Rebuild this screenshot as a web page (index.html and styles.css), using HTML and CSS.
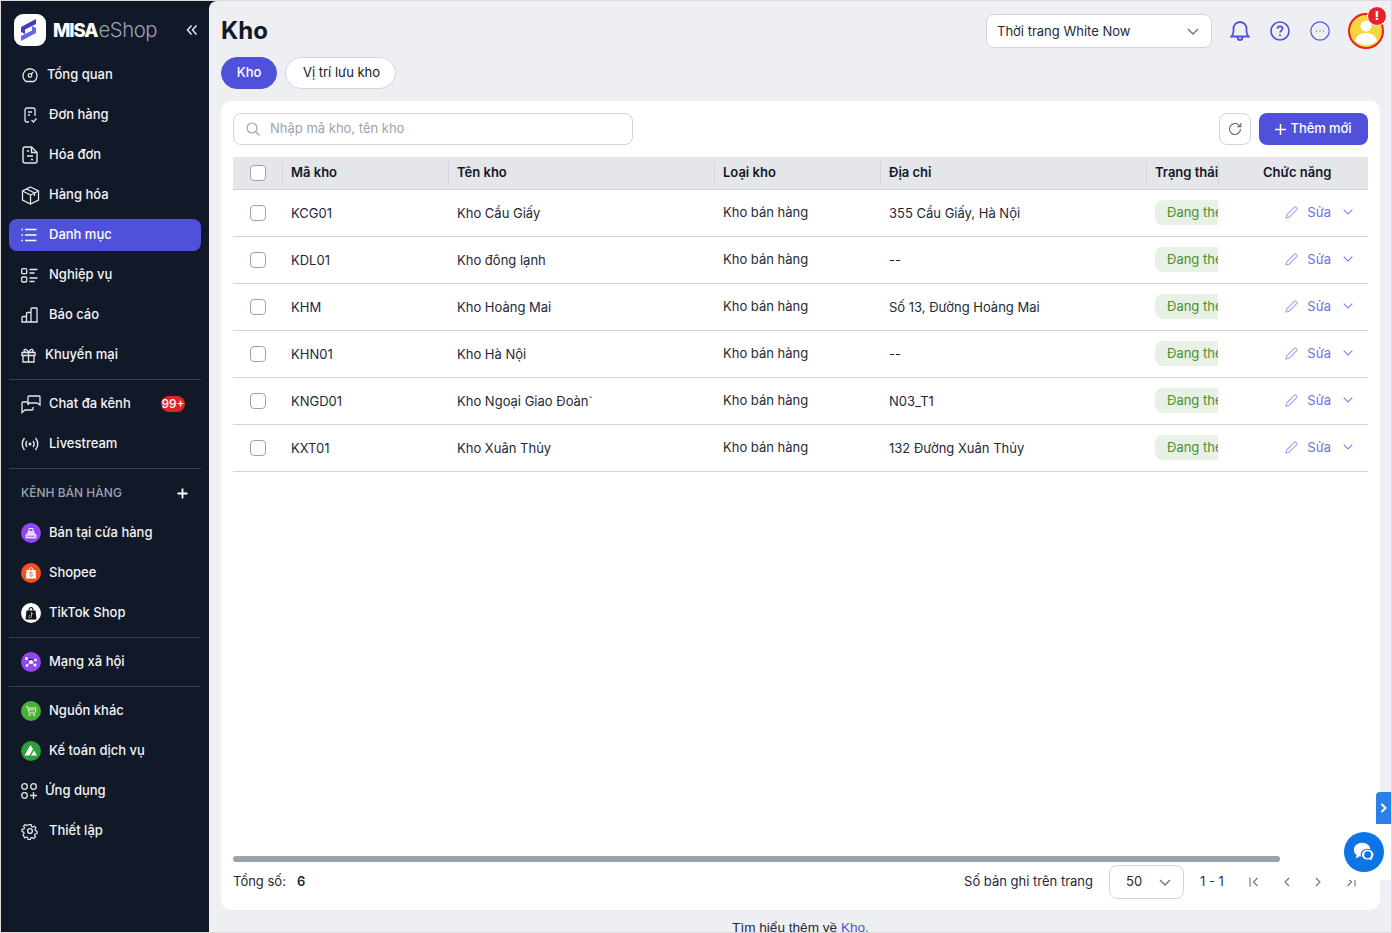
FILE: index.html
```html
<!DOCTYPE html>
<html lang="vi">
<head>
<meta charset="utf-8">
<title>Kho</title>
<link rel="stylesheet" href="styles.css">
</head>
<body>
<div class="app">
  <aside class="sidebar">
    <div class="brand">
      <span class="logo"><svg width="32" height="32" viewBox="0 0 32 32"><path d="M22 5 7 13v5l4 2v-4.500L22 10z" fill="#3f3fb8"/><path d="M7 27l15-8v-5l-4-2v4.500L7 22z" fill="#6567ea"/></svg></span>
      <span class="brand-name"><b>MISA</b><i>eShop</i></span>
      <svg class="collapse" width="12" height="12" viewBox="0 0 12 12" fill="none" stroke="#e5e7eb" stroke-width="1.500"><path d="M5.500 1.500 1.500 6l4 4.500M10.500 1.500 6.500 6l4 4.500"/></svg>
    </div>
    <nav class="nav">
      <a class="item w26"><span class="ic"><svg width="18" height="18" viewBox="0 0 18 18" fill="none" stroke="#e5e7eb" stroke-width="1.300"><path d="M5 15.500h8a7 7 0 1 0-8 0z"/><circle cx="9" cy="9.500" r="1.800"/><path d="M10.300 8.200 12 6"/></svg></span>Tổng quan</a>
      <a class="item"><span class="ic"><svg width="18" height="18" viewBox="0 0 18 18" fill="none" stroke="#e5e7eb" stroke-width="1.300"><path d="M8 16H6a2 2 0 0 1-2-2V4a2 2 0 0 1 2-2h6a2 2 0 0 1 2 2v6"/><path d="M7 6h4M7 9h2M10.500 14l2 2 3-3.500"/></svg></span>Đơn hàng</a>
      <a class="item"><span class="ic"><svg width="18" height="20" viewBox="0 0 18 20" fill="none" stroke="#e5e7eb" stroke-width="1.400"><path d="M10.500 2H4a2 2 0 0 0-2 2v12a2 2 0 0 0 2 2h10a2 2 0 0 0 2-2V7.500z"/><path d="M10.500 2v5.500H16M6 6h2M6 11h6M10 14.500h2"/></svg></span>Hóa đơn</a>
      <a class="item"><span class="ic"><svg width="19" height="19" viewBox="0 0 19 19" fill="none" stroke="#e5e7eb" stroke-width="1.300"><path d="M9.500 1 17.500 5v9l-8 4-8-4V5zM1.500 5l8 4 8-4M9.500 9v9M5.500 3l8 4v3"/></svg></span>Hàng hóa</a>
      <a class="item active"><span class="ic"><svg width="16" height="14" viewBox="0 0 16 14" fill="none" stroke="#fff" stroke-width="1.500"><path d="M4 1.500h11.500M4 7h11.500M4 12.500h11.500M.5 1.500h1.500M.5 7h1.500M.5 12.500h1.500"/></svg></span>Danh mục</a>
      <a class="item"><span class="ic"><svg width="17" height="15" viewBox="0 0 17 15" fill="none" stroke="#e5e7eb" stroke-width="1.300"><rect x=".7" y=".7" width="5" height="5" rx="1"/><rect x=".7" y="9" width="5" height="5" rx="1"/><path d="M8.500 1.500h8M8.500 5h5M8.500 10h8M8.500 13.500h5"/></svg></span>Nghiệp vụ</a>
      <a class="item"><span class="ic"><svg width="17" height="16" viewBox="0 0 17 16" fill="none" stroke="#e5e7eb" stroke-width="1.300"><path d="M1 15V10.500a1 1 0 0 1 1-1h3.500V15zM5.500 15V6.500a1 1 0 0 1 1-1h3.500V15zM10 15V2a1 1 0 0 1 1-1h4.500a.5.5 0 0 1 .5.500V15zM1 15h15"/></svg></span>Báo cáo</a>
      <a class="item w24"><span class="ic"><svg width="15" height="15" viewBox="0 0 15 15" fill="none" stroke="#e5e7eb" stroke-width="1.300"><path d="M1 4.500h13v3H1zM2 7.500V14h11V7.500M7.500 4.500V14M7.500 4.500C6 1 3 .5 3 2.500c0 1.500 2 2 4.500 2zM7.500 4.500C9 1 12 .5 12 2.500c0 1.500-2 2-4.500 2z"/></svg></span>Khuyến mại</a>
      <hr class="sep">
      <a class="item"><span class="ic"><svg width="20" height="19" viewBox="0 0 20 19" fill="none" stroke="#e5e7eb" stroke-width="1.300"><path d="M7 7H2a1 1 0 0 0-1 1v9.500l3-2.500h7a1 1 0 0 0 1-1v-2"/><path d="M7 10V2a1 1 0 0 1 1-1h10a1 1 0 0 1 1 1v8l-3-2H8z"/></svg></span>Chat đa kênh<span class="badge">99+</span></a>
      <a class="item"><span class="ic"><svg width="18" height="14" viewBox="0 0 18 14" fill="none" stroke="#e5e7eb" stroke-width="1.400"><path d="M3.500 1C.5 4.500.5 9.500 3.500 13M14.500 1c3 3.500 3 8.500 0 12M6 4c-1.500 2-1.500 4 0 6M12 4c1.500 2 1.500 4 0 6"/><circle cx="9" cy="7" r=".8" fill="#e5e7eb"/></svg></span>Livestream</a>
      <hr class="sep">
      <div class="section"><span>KÊNH BÁN HÀNG</span><svg width="11" height="11" viewBox="0 0 11 11" stroke="#fff" stroke-width="1.800"><path d="M5.500 .5v10M.5 5.500h10"/></svg></div>
      <a class="item"><span class="ic"><svg width="20" height="20" viewBox="0 0 20 20"><circle cx="10" cy="10" r="10" fill="#9146f0"/><path d="M5 15h10v-3.500H5zM6.500 11.500 7 8.500h6l.5 3" fill="#e9d5ff" stroke="#f3e8ff" stroke-width=".8"/><path d="M8 8.500V5.500h4v3" fill="none" stroke="#f3e8ff" stroke-width="1"/><path d="M6 13.200h8" stroke="#9146f0" stroke-width=".8"/></svg></span>Bán tại cửa hàng</a>
      <a class="item"><span class="ic"><svg width="20" height="20" viewBox="0 0 20 20"><circle cx="10" cy="10" r="10" fill="#f4511e"/><path d="M5.500 7h9l.6 8.500H4.900z" fill="#fff"/><path d="M8 7c0-3 4-3 4 0" fill="none" stroke="#fff"/><path d="M11.500 9.500c-1-1-3-.5-2.700.6.300 1 2.700.8 2.700 2 0 1.100-2 1.300-3 .4" fill="none" stroke="#f4511e"/></svg></span>Shopee</a>
      <a class="item"><span class="ic"><svg width="20" height="20" viewBox="0 0 20 20"><circle cx="10" cy="10" r="10" fill="#fff"/><path d="M5.500 7.500h9l1 9h-11z" fill="#111"/><path d="M8 7.500c0-4 4-4 4 0" fill="none" stroke="#111" stroke-width="1.200"/><path d="M10.500 9v4.500a1.300 1.300 0 1 1-1.300-1.300M10.500 9.500c.3 1 1 1.400 1.800 1.500" fill="none" stroke="#4fd8e0"/></svg></span>TikTok Shop</a>
      <hr class="sep">
      <a class="item"><span class="ic"><svg width="20" height="20" viewBox="0 0 20 20"><circle cx="10" cy="10" r="10" fill="#9146f0"/><path d="M5.500 6.500 10 10l4.500-2M10 10l-4 3.500M10 10l4 3" stroke="#e9d5ff" stroke-width=".8"/><circle cx="10" cy="10" r="2" fill="#fff"/><circle cx="5.500" cy="6.500" r="1.500" fill="#fff"/><circle cx="14.500" cy="8" r="1.300" fill="#fff"/><circle cx="6" cy="13.500" r="1.300" fill="#fff"/><circle cx="14" cy="13" r="1.500" fill="#fff"/></svg></span>Mạng xã hội</a>
      <hr class="sep">
      <a class="item"><span class="ic"><svg width="20" height="20" viewBox="0 0 20 20"><circle cx="10" cy="10" r="10" fill="#4caf3a"/><path d="M5 5.500h1.500l1.500 6.500h6l1-5H7M8 7.500v2.500M10 7.500v2.500M12 7.500v2.500" fill="none" stroke="#d9f2d2" stroke-width="1"/><circle cx="8.500" cy="14" r="1" fill="#d9f2d2"/><circle cx="13" cy="14" r="1" fill="#d9f2d2"/></svg></span>Nguồn khác</a>
      <a class="item"><span class="ic"><svg width="20" height="20" viewBox="0 0 20 20"><circle cx="10" cy="10" r="10" fill="#2e9e3a"/><path d="M3.500 14.500 9.500 4l2.500 4-3.500 6.500zM10 14.500l3-5 3 5z" fill="#fff"/></svg></span>Kế toán dịch vụ</a>
      <a class="item w24"><span class="ic"><svg width="16" height="16" viewBox="0 0 16 16" fill="none" stroke="#e5e7eb" stroke-width="1.300"><circle cx="3.500" cy="3.500" r="2.800"/><circle cx="12.500" cy="3.500" r="2.800"/><circle cx="3.500" cy="12.500" r="2.800"/><path d="M12.500 9v7M9 12.500h7"/></svg></span>Ứng dụng</a>
      <a class="item"><span class="ic"><svg width="18" height="18" viewBox="0 0 24 24" fill="none" stroke="#e5e7eb" stroke-width="1.800"><circle cx="12" cy="12" r="3.200"/><path d="M10.300 2.500h3.400l.6 2.900 1.700.8 2.600-1.400 2.300 2.500-1.500 2.500.6 1.700 2.500 1-.1 3.300-2.900.6-.8 1.700 1.400 2.600-2.500 2.300-2.500-1.500-1.700.6-1 2.500h-3.300l-.6-2.900-1.700-.8-2.600 1.400L1.800 18l1.500-2.500-.6-1.700-2.500-1V9.500l2.900-.6.800-1.700-1.400-2.600L5 2.300l2.500 1.500 1.700-.6z" transform="translate(1.200 1.200) scale(.9)"/></svg></span>Thiết lập</a>
    </nav>
  </aside>

  <main class="main">
    <header class="topbar">
      <h1>Kho</h1>
      <div class="top-right">
        <div class="store"><span>Thời trang White Now</span><svg width="12" height="7" viewBox="0 0 12 7" fill="none" stroke="#6b7280" stroke-width="1.400"><path d="m1 1 5 5 5-5"/></svg></div>
        <svg class="top-ic" width="20" height="22" viewBox="0 0 20 22" fill="none" stroke="#4f51d8" stroke-width="1.800"><path d="M1.500 16.500c1.500-1.500 2-3 2-5.500V8.500a6.500 6.500 0 0 1 13 0V11c0 2.500.5 4 2 5.500zM7.500 17c0 4 5 4 5 0M10 2V1"/></svg>
        <svg class="top-ic" width="20" height="20" viewBox="0 0 20 20" fill="none" stroke="#4f51d8" stroke-width="1.600"><circle cx="10" cy="10" r="9"/><path d="M7.500 7.800c0-3.200 5-3.200 5 0 0 2-2.500 1.800-2.500 3.800" stroke-width="1.700"/><circle cx="10" cy="14.300" r="1" fill="#4f51d8" stroke="none"/></svg>
        <svg class="top-ic" width="20" height="20" viewBox="0 0 20 20" fill="none" stroke="#5b5de0" stroke-width="1.300"><circle cx="10" cy="10" r="9.200"/><path d="M6 10h.8M9.600 10h.8M13.200 10h.8" stroke-width="1.300"/></svg>
        <div class="avatar">
          <svg width="36" height="36" viewBox="0 0 36 36"><circle cx="18" cy="18" r="17" fill="#f6d63f" stroke="#ef1c1c" stroke-width="2"/><circle cx="18" cy="13" r="5.500" fill="#fff"/><path d="M7 28c1.500-6 6-8 11-8s9.500 2 11 8c-6 5.500-16 5.500-22 0z" fill="#fff"/></svg>
          <span class="alert">!</span>
        </div>
      </div>
    </header>
    <div class="tabs"><a class="tab on">Kho</a><a class="tab">Vị trí lưu kho</a></div>

    <section class="card">
      <div class="toolbar">
        <div class="search"><svg class="search-ic" width="14" height="14" viewBox="0 0 14 14" fill="none" stroke="#9ca3af" stroke-width="1.200"><circle cx="6" cy="6" r="5"/><path d="m9.700 9.700 3.800 3.800"/></svg><span>Nhập mã kho, tên kho</span></div>
        <div class="tools">
          <button class="refresh"><svg width="14" height="14" viewBox="0 0 14 14" fill="none" stroke="#6b7280" stroke-width="1.200"><path d="M12.500 7A5.500 5.500 0 1 1 10.800 3L12.500 4.500M12.800 1v3.700H9.200"/></svg></button>
          <button class="add"><svg width="11" height="11" viewBox="0 0 11 11" stroke="#fff" stroke-width="1.500"><path d="M5.500 0v11M0 5.500h11"/></svg>Thêm mới</button>
        </div>
      </div>
      <div class="table-wrap">
        <table>
          <colgroup><col class="c1"><col class="c2"><col class="c3"><col class="c4"><col class="c5"><col class="c6"><col class="c7"></colgroup>
          <thead><tr>
            <th><div class="th-check"><span class="check"></span></div></th>
            <th><div>Mã kho</div></th><th><div>Tên kho</div></th><th><div>Loại kho</div></th><th><div>Địa chỉ</div></th><th><div>Trạng thái</div></th><th><div class="th-act">Chức năng</div></th>
          </tr></thead>
          <tbody>
            <tr><td class="cc"><span class="check"></span></td><td>KCG01</td><td>Kho Cầu Giấy</td><td class="up">Kho bán hàng</td><td>355 Cầu Giấy, Hà Nội</td><td class="st"><span class="status">Đang theo dõi</span></td><td><div class="act"><svg class="pen" width="13" height="13" viewBox="0 0 13 13" fill="none" stroke="#a5a6ef" stroke-width="1.100"><path d="M1 12l.8-3.200L9.300 1.300a1.300 1.300 0 0 1 1.800 0l.6.600a1.300 1.300 0 0 1 0 1.800L4.200 11.200z"/></svg><span>Sửa</span><svg class="chev" width="10" height="6" viewBox="0 0 10 6" fill="none" stroke="#8183e8" stroke-width="1.200"><path d="m.7.7 4.300 4.300L9.300.7"/></svg></div></td></tr>
            <tr><td class="cc"><span class="check"></span></td><td>KDL01</td><td>Kho đông lạnh</td><td class="up">Kho bán hàng</td><td>--</td><td class="st"><span class="status">Đang theo dõi</span></td><td><div class="act"><svg class="pen" width="13" height="13" viewBox="0 0 13 13" fill="none" stroke="#a5a6ef" stroke-width="1.100"><path d="M1 12l.8-3.200L9.300 1.300a1.300 1.300 0 0 1 1.800 0l.6.600a1.300 1.300 0 0 1 0 1.800L4.200 11.200z"/></svg><span>Sửa</span><svg class="chev" width="10" height="6" viewBox="0 0 10 6" fill="none" stroke="#8183e8" stroke-width="1.200"><path d="m.7.7 4.300 4.300L9.300.7"/></svg></div></td></tr>
            <tr><td class="cc"><span class="check"></span></td><td>KHM</td><td>Kho Hoàng Mai</td><td class="up">Kho bán hàng</td><td>Số 13, Đường Hoàng Mai</td><td class="st"><span class="status">Đang theo dõi</span></td><td><div class="act"><svg class="pen" width="13" height="13" viewBox="0 0 13 13" fill="none" stroke="#a5a6ef" stroke-width="1.100"><path d="M1 12l.8-3.200L9.300 1.300a1.300 1.300 0 0 1 1.800 0l.6.600a1.300 1.300 0 0 1 0 1.800L4.200 11.200z"/></svg><span>Sửa</span><svg class="chev" width="10" height="6" viewBox="0 0 10 6" fill="none" stroke="#8183e8" stroke-width="1.200"><path d="m.7.7 4.300 4.300L9.300.7"/></svg></div></td></tr>
            <tr><td class="cc"><span class="check"></span></td><td>KHN01</td><td>Kho Hà Nội</td><td class="up">Kho bán hàng</td><td>--</td><td class="st"><span class="status">Đang theo dõi</span></td><td><div class="act"><svg class="pen" width="13" height="13" viewBox="0 0 13 13" fill="none" stroke="#a5a6ef" stroke-width="1.100"><path d="M1 12l.8-3.200L9.300 1.300a1.300 1.300 0 0 1 1.800 0l.6.600a1.300 1.300 0 0 1 0 1.800L4.200 11.200z"/></svg><span>Sửa</span><svg class="chev" width="10" height="6" viewBox="0 0 10 6" fill="none" stroke="#8183e8" stroke-width="1.200"><path d="m.7.7 4.300 4.300L9.300.7"/></svg></div></td></tr>
            <tr><td class="cc"><span class="check"></span></td><td>KNGD01</td><td>Kho Ngoại Giao Đoàn`</td><td class="up">Kho bán hàng</td><td>N03_T1</td><td class="st"><span class="status">Đang theo dõi</span></td><td><div class="act"><svg class="pen" width="13" height="13" viewBox="0 0 13 13" fill="none" stroke="#a5a6ef" stroke-width="1.100"><path d="M1 12l.8-3.200L9.300 1.300a1.300 1.300 0 0 1 1.800 0l.6.600a1.300 1.300 0 0 1 0 1.800L4.200 11.200z"/></svg><span>Sửa</span><svg class="chev" width="10" height="6" viewBox="0 0 10 6" fill="none" stroke="#8183e8" stroke-width="1.200"><path d="m.7.7 4.300 4.300L9.300.7"/></svg></div></td></tr>
            <tr><td class="cc"><span class="check"></span></td><td>KXT01</td><td>Kho Xuân Thủy</td><td class="up">Kho bán hàng</td><td>132 Đường Xuân Thủy</td><td class="st"><span class="status">Đang theo dõi</span></td><td><div class="act"><svg class="pen" width="13" height="13" viewBox="0 0 13 13" fill="none" stroke="#a5a6ef" stroke-width="1.100"><path d="M1 12l.8-3.200L9.300 1.300a1.300 1.300 0 0 1 1.800 0l.6.600a1.300 1.300 0 0 1 0 1.800L4.200 11.200z"/></svg><span>Sửa</span><svg class="chev" width="10" height="6" viewBox="0 0 10 6" fill="none" stroke="#8183e8" stroke-width="1.200"><path d="m.7.7 4.300 4.300L9.300.7"/></svg></div></td></tr>
          </tbody>
        </table>
      </div>
      <div class="scroll"><div class="thumb"></div></div>
      <div class="pager">
        <div class="total">Tổng số:<b>6</b></div>
        <div class="pg-right">
          <span>Số bản ghi trên trang</span>
          <div class="size"><span>50</span><svg width="12" height="7" viewBox="0 0 12 7" fill="none" stroke="#6b7280" stroke-width="1.400"><path d="m1 1 5 5 5-5"/></svg></div>
          <span class="range">1 - 1</span>
          <div class="pg-btns">
            <svg width="10" height="10" viewBox="0 0 10 10" fill="none" stroke="#6b7280" stroke-width="1.100"><path d="M1 .5v9M8.500 1l-4 4 4 4"/></svg>
            <svg width="6" height="10" viewBox="0 0 6 10" fill="none" stroke="#6b7280" stroke-width="1.100"><path d="M5 1 1 5l4 4"/></svg>
            <svg width="6" height="10" viewBox="0 0 6 10" fill="none" stroke="#6b7280" stroke-width="1.100"><path d="m1 1 4 4-4 4"/></svg>
            <svg width="10" height="10" viewBox="0 0 10 10" fill="none" stroke="#6b7280" stroke-width="1.100"><path d="M9 .5v9M1.500 1l4 4-4 4"/></svg>
          </div>
        </div>
      </div>
    </section>
    <p class="learn">Tìm hiểu thêm về <a>Kho.</a></p>
  </main>

  <div class="float-tab"><svg width="7" height="10" viewBox="0 0 7 10" fill="none" stroke="#fff" stroke-width="2"><path d="m1.500 1 4 4-4 4"/></svg></div>
  <div class="float-chat"><span class="bubble"><svg width="24" height="22" viewBox="0 0 26 24"><path d="M11 2c5 0 9 3.200 9 7.500S16 17 11 17c-1 0-2-.1-2.800-.4L4 19l1-3.800C3 13.800 2 11.800 2 9.500 2 5.200 6 2 11 2z" fill="#fff"/><path d="M17 9c4 0 7 2.600 7 6 0 1.800-.8 3.200-2 4.300l.7 3-3.300-1.800c-.8.300-1.600.400-2.400.400-4 0-7-2.600-7-6s3-5.900 7-5.900z" fill="#fff" stroke="#0d74e6" stroke-width="1.300"/><circle cx="17" cy="15" r="3.800" fill="#0d74e6"/></svg></span></div>
</div>
</body>
</html>
```

FILE: styles.css
```css
* { box-sizing: border-box; }
html, body { margin: 0; height: 100%; overflow: hidden; }
body { font-family: Inter, "Liberation Sans", sans-serif; font-size: 13px; color: #111827; }
.app { position: relative; display: flex; height: 933px; border: 1px solid #e0dbdb; background: #111827; overflow: hidden; }

/* sidebar */
.sidebar { width: 208px; flex: none; background: #111827; color: #f3f4f6; }
.brand { display: flex; align-items: center; height: 32px; margin: 13px 0 0 13px; }
.logo { width: 32px; height: 32px; background: #fff; border-radius: 9px; flex: none; display: flex; }
.brand-name { margin-left: 7px; display: flex; align-items: center; line-height: 32px; }
.brand-name b { font-size: 18.500px; font-weight: 800; letter-spacing: -1.100px; color: #fff; }
.brand-name i { font-style: normal; font-weight: 300; font-size: 20.300px; color: #9ca3af; letter-spacing: -.4px; margin-left: 1px; }
.collapse { margin-left: auto; margin-right: 11px; }
.nav { display: flex; flex-direction: column; padding: 13px 8px 0; gap: 8px; }
.item { display: flex; align-items: center; height: 32px; padding: 0 0 2px 12px; border-radius: 8px; line-height: 20px; white-space: nowrap; font-weight: 500; }
.item.active { background: #5051db; color: #fff; }
.ic { width: 28px; flex: none; display: flex; align-items: center; margin-bottom: -2px; }
.w26 .ic { width: 26px; }
.w24 .ic { width: 24px; }
.badge { margin: 0 16px -2px auto; width: 24px; height: 16px; border-radius: 8px; background: #dc2626; color: #fff; font-size: 12px; font-weight: 500; line-height: 16px; text-align: center; }
.sep { width: 192px; height: 1px; margin: 0; border: 0; background: #374151; flex: none; }
.section { display: flex; align-items: center; justify-content: space-between; height: 32px; padding: 0 13px 2px 12px; color: #9ca3af; font-size: 12px; font-weight: 500; }
.section svg { margin-bottom: -2px; }

/* main */
.main { flex: 1; min-width: 0; background: #eeeff3; border-radius: 8px 0 0 0; display: flex; flex-direction: column; padding: 0 11px 0 12px; overflow: hidden; }
.topbar { display: flex; justify-content: space-between; align-items: center; height: 34px; margin-top: 13px; flex: none; }
h1 { margin: 0; font-size: 24px; font-weight: 700; line-height: 32px; color: #111827; }
.top-right { display: flex; align-items: center; }
.store { width: 226px; height: 34px; background: #fff; border: 1px solid #d1d5db; border-radius: 8px; display: flex; align-items: center; justify-content: space-between; padding: 0 12px 0 10px; color: #1f2937; }
.top-ic { margin-left: 20px; width: 20px; flex: none; }
.store + .top-ic { margin-left: 18px; }
.avatar { position: relative; width: 36px; height: 36px; margin-left: 18px; margin-right: -4px; }
.avatar svg { display: block; }
.alert { position: absolute; top: -7px; right: -3px; width: 18px; height: 18px; border-radius: 50%; background: #e5232d; border: 1px solid #fff; box-sizing: content-box; color: #fff; font-size: 12px; font-weight: 800; line-height: 18px; text-align: center; }
.tabs { display: flex; gap: 8px; margin-top: 9px; flex: none; }
.tab { height: 32px; padding: 0 15px 0 17px; border-radius: 16px; line-height: 28px; background: #fff; border: 1px solid #d1d5db; color: #111827; }
.tab.on { width: 56px; padding: 0; text-align: center; background: #5051db; border-color: #5051db; color: #fff; font-weight: 500; }

.card { flex: none; height: 809px; margin-top: 12px; background: #fff; border-radius: 10px; padding: 12px 12px 11px; display: flex; flex-direction: column; }
.toolbar { display: flex; justify-content: space-between; height: 32px; flex: none; }
.search { width: 400px; height: 32px; border: 1px solid #d1d5db; border-radius: 8px; display: flex; align-items: center; padding: 0 0 2px 12px; gap: 10px; color: #9ca3af; }
.search-ic { margin-bottom: -2px; }
.tools { display: flex; gap: 8px; }
.refresh { width: 32px; height: 32px; border: 1px solid #d1d5db; background: #fff; border-radius: 8px; padding: 0; display: flex; align-items: center; justify-content: center; }
.add { width: 109px; height: 32px; border: 0; border-radius: 8px; background: #5051db; color: #fff; font: 500 13px Inter, sans-serif; letter-spacing: -.1px; display: flex; align-items: center; justify-content: center; gap: 5px; padding: 0 1px 2px 0; }
.add svg { margin-bottom: -2px; }

.table-wrap { flex: 1; margin-top: 12px; min-height: 0; }
table { width: 1135px; border-collapse: collapse; table-layout: fixed; }
.c1 { width: 49px; } .c2 { width: 166px; } .c3 { width: 266px; } .c4 { width: 166px; } .c5 { width: 266px; } .c6 { width: 72px; } .c7 { width: 150px; }
th { background: #e5e6ea; height: 32px; padding: 5px 0; text-align: left; font-weight: 600; border-bottom: 1px solid #d1d5db; }
th > div { height: 22px; line-height: 20px; border-left: 1px solid #d1d5db; padding-left: 8px; white-space: nowrap; overflow: hidden; }
th > .th-check { border: 0; padding: 3px 0 0 17px; height: 22px; }
th > .th-act { padding-left: 44px; }
td { height: 47px; padding: 0 0 0 9px; border-bottom: 1px solid #d1d5db; line-height: 20px; color: #1f2937; }
td.cc { padding: 0 0 0 17px; }
td.up { padding-bottom: 2px; }
td.st { padding: 0 0 2px 9px; overflow: hidden; }
.check { display: block; width: 16px; height: 16px; border: 1px solid #9ca3af; border-radius: 4px; background: #fff; }
.status { display: block; width: 100px; height: 25px; line-height: 25px; padding-left: 12px; border-radius: 8px; background: #e8f1e6; color: #4b8f2f; white-space: nowrap; }
.act { display: flex; align-items: center; padding-bottom: 2px; color: #6d6fe4; justify-content: flex-end; padding-right: 15px; }
.pen { margin-right: 9px; }
.chev { margin-left: 12px; }

.scroll { height: 6px; flex: none; }
.thumb { width: 1047px; height: 6px; border-radius: 3px; background: #9ca3af; }
.pager { display: flex; justify-content: space-between; align-items: center; height: 34px; margin-top: 3px; flex: none; color: #1f2937; }
.total { padding-bottom: 2px; }
.total b { font-weight: 600; margin-left: 11px; }
.pg-right { display: flex; align-items: center; }
.pg-right > span, .size span { padding-bottom: 2px; }
.size { width: 75px; height: 34px; margin-left: 16px; border: 1px solid #d1d5db; border-radius: 8px; display: flex; align-items: center; justify-content: space-between; padding: 0 12px 0 16px; }
.range { margin-left: 16px; width: 25px; white-space: nowrap; color: #1e3a5f; }
.pg-btns { display: flex; align-items: center; margin-left: 24px; margin-right: 12px; width: 107px; justify-content: space-between; }
.learn { margin: 8px 0 0; text-align: center; color: #1f2937; flex: none; font: 13.600px/20px "Liberation Sans", Arial, sans-serif; }
.learn a { color: #5051db; }

/* floating widgets */
.float-tab { position: absolute; right: 0; bottom: 108px; width: 15px; height: 32px; background: #2b7fe8; border-radius: 4px 0 0 0; display: flex; align-items: center; justify-content: center; }
.float-chat { position: absolute; right: 0; bottom: 52px; width: 55px; height: 56px; background: #fff; border-radius: 8px 0 0 8px; padding: 8px; }
.bubble { display: flex; align-items: center; justify-content: center; width: 40px; height: 40px; border-radius: 50%; background: #0d74e6; }
```
